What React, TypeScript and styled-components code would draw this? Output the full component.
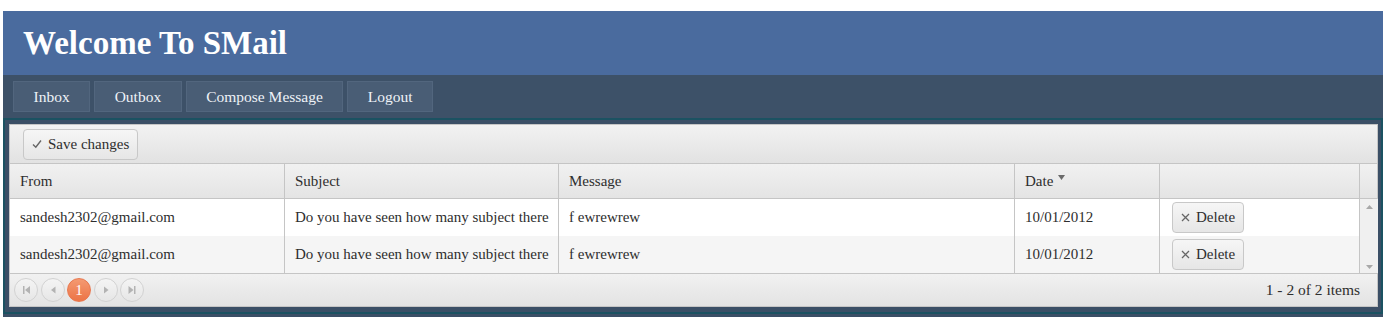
import styled, { createGlobalStyle } from 'styled-components';

const GlobalStyle = createGlobalStyle`
  html, body {
    margin: 0;
    padding: 0;
    background: #ffffff;
  }
  body {
    font-family: "Liberation Serif", "Times New Roman", serif;
    font-size: 15px;
  }
`;

// --- 레이아웃 ---
const Page = styled.div`
  margin: 11px 5px 0 3px;
  min-height: calc(100vh - 11px);
  background: #3b4f66;
`;

const Header = styled.header`
  height: 64px;
  background: #4a6b9e;
  padding-left: 20px;
`;

const Title = styled.h1`
  margin: 0;
  font-size: 33px;
  font-weight: bold;
  line-height: 64px;
  color: #ffffff;
`;

const Nav = styled.nav`
  display: flex;
  gap: 4px;
  height: 43px;
  box-sizing: border-box;
  padding: 6px 10px;
  background: #3d5168;
`;

const NavButton = styled.button`
  height: 31px;
  padding: 0 19.5px;
  border: 1px solid #52667e;
  background: #495d75;
  color: #eef2f7;
  font-family: inherit;
  font-size: 15.5px;
  cursor: pointer;
`;

const Content = styled.div`
  border: 2px solid #1b5262;
  padding: 4px 3px 5px 4px;
`;

const Grid = styled.div`
  border: 1px solid #c5c5c5;
  background: #ffffff;
  color: #2e2e2e;
`;

const Toolbar = styled.div`
  display: flex;
  align-items: center;
  height: 38px;
  padding: 0 13px;
  background: linear-gradient(#f2f2f2, #e2e2e2);
  border-bottom: 1px solid #c5c5c5;
`;

const GridButton = styled.button`
  display: inline-flex;
  align-items: center;
  gap: 6px;
  height: 31px;
  padding: 0 8px;
  border: 1px solid #c8c8c8;
  border-radius: 4px;
  background: linear-gradient(#f6f6f6, #e6e6e6);
  color: #2e2e2e;
  font-family: inherit;
  font-size: 15px;
  cursor: pointer;
`;

const columns = '275px 274px 456px 145px 200px';

const HeaderRow = styled.div`
  display: grid;
  grid-template-columns: ${columns} 1fr;
  height: 34px;
  background: linear-gradient(#f1f1f1, #e4e4e4);
  border-bottom: 1px solid #c5c5c5;
`;

const HeadCell = styled.div<{ $last?: boolean }>`
  display: flex;
  align-items: center;
  gap: 5px;
  padding-left: 10px;
  border-right: ${({ $last }) => ($last ? 'none' : '1px solid #c5c5c5')};
`;

const Body = styled.div`
  display: grid;
  grid-template-columns: 1fr 18px;
  border-bottom: 1px solid #c5c5c5;
`;

const Row = styled.div<{ $alt?: boolean }>`
  display: grid;
  grid-template-columns: ${columns};
  height: 37px;
  background: ${({ $alt }) => ($alt ? '#f5f5f5' : '#ffffff')};
`;

const Cell = styled.div`
  display: flex;
  align-items: center;
  padding-left: 10px;
  border-right: 1px solid #c5c5c5;
  white-space: nowrap;
  overflow: hidden;
`;

const ActionCell = styled(Cell)`
  padding-left: 12px;
`;

const Scrollbar = styled.div`
  display: flex;
  flex-direction: column;
  justify-content: space-between;
  align-items: center;
  padding: 6px 0 4px;
  background: #f0f0f0;
`;

const Pager = styled.div`
  display: flex;
  align-items: center;
  justify-content: space-between;
  height: 32px;
  padding: 0 17px 0 4px;
  background: linear-gradient(#f1f1f1, #e3e3e3);
`;

const PagerButtons = styled.div`
  display: flex;
  gap: 2.5px;
`;

const PageButton = styled.span<{ $active?: boolean }>`
  display: flex;
  align-items: center;
  justify-content: center;
  width: 24px;
  height: 24px;
  box-sizing: border-box;
  border-radius: 50%;
  border: 1px solid ${({ $active }) => ($active ? '#e9784f' : '#d2d2d2')};
  background: ${({ $active }) =>
    $active ? 'linear-gradient(#f49a72, #ec7446)' : 'linear-gradient(#f4f4f4, #e6e6e6)'};
  color: #ffffff;
  font-size: 15px;
`;

const PagerInfo = styled.span`
  font-size: 15.5px;
`;

// --- 아이콘 ---
const Check = () => (
  <svg width="10" height="10" viewBox="0 0 10 10">
    <path d="M1 5.5 L3.8 8.2 L9 1.5" fill="none" stroke="#666" strokeWidth="1.4" />
  </svg>
);

const Cross = () => (
  <svg width="9" height="9" viewBox="0 0 9 9">
    <path d="M1 1 L8 8 M8 1 L1 8" fill="none" stroke="#666" strokeWidth="1.3" />
  </svg>
);

const SortDown = () => (
  <svg width="7" height="6" viewBox="0 0 7 6" style={{ marginTop: -6 }}>
    <path d="M0 0 L7 0 L3.5 5 Z" fill="#6a6a6a" />
  </svg>
);

const Arrow = ({ dir }: { dir: 'up' | 'down' }) => (
  <svg width="7" height="4" viewBox="0 0 7 4">
    <path d={dir === 'up' ? 'M0 4 L7 4 L3.5 0 Z' : 'M0 0 L7 0 L3.5 4 Z'} fill="#a8a8a8" />
  </svg>
);

const PagerIcon = ({ kind }: { kind: 'first' | 'prev' | 'next' | 'last' }) => {
  const paths: Record<string, string> = {
    first: 'M2 1 H3.5 V9 H2 Z M9 1 V9 L4 5 Z',
    prev: 'M7.5 1.5 V8.5 L3 5 Z',
    next: 'M3 1.5 V8.5 L7.5 5 Z',
    last: 'M1.5 1 V9 L6.5 5 Z M7 1 H8.5 V9 H7 Z',
  };
  return (
    <svg width="10" height="10" viewBox="0 0 10 10">
      <path d={paths[kind]} fill="#b3b3b3" />
    </svg>
  );
};

const messages = [
  { from: 'sandesh2302@gmail.com', subject: 'Do you have seen how many subject there', message: 'f ewrewrew', date: '10/01/2012' },
  { from: 'sandesh2302@gmail.com', subject: 'Do you have seen how many subject there', message: 'f ewrewrew', date: '10/01/2012' },
];

export default function App() {
  return (
    <>
      <GlobalStyle />
      <Page>
        <Header>
          <Title>Welcome To SMail</Title>
        </Header>
        <Nav>
          <NavButton>Inbox</NavButton>
          <NavButton>Outbox</NavButton>
          <NavButton>Compose Message</NavButton>
          <NavButton>Logout</NavButton>
        </Nav>
        <Content>
          <Grid>
            <Toolbar>
              <GridButton>
                <Check />
                Save changes
              </GridButton>
            </Toolbar>
            <HeaderRow>
              <HeadCell>From</HeadCell>
              <HeadCell>Subject</HeadCell>
              <HeadCell>Message</HeadCell>
              <HeadCell>
                Date <SortDown />
              </HeadCell>
              <HeadCell />
              <HeadCell $last />
            </HeaderRow>
            <Body>
              <div>
                {messages.map((m, i) => (
                  <Row key={i} $alt={i % 2 === 1}>
                    <Cell>{m.from}</Cell>
                    <Cell>{m.subject}</Cell>
                    <Cell>{m.message}</Cell>
                    <Cell>{m.date}</Cell>
                    <ActionCell>
                      <GridButton>
                        <Cross />
                        Delete
                      </GridButton>
                    </ActionCell>
                  </Row>
                ))}
              </div>
              <Scrollbar>
                <Arrow dir="up" />
                <Arrow dir="down" />
              </Scrollbar>
            </Body>
            <Pager>
              <PagerButtons>
                <PageButton><PagerIcon kind="first" /></PageButton>
                <PageButton><PagerIcon kind="prev" /></PageButton>
                <PageButton $active>1</PageButton>
                <PageButton><PagerIcon kind="next" /></PageButton>
                <PageButton><PagerIcon kind="last" /></PageButton>
              </PagerButtons>
              <PagerInfo>1 - 2 of 2 items</PagerInfo>
            </Pager>
          </Grid>
        </Content>
      </Page>
    </>
  );
}
